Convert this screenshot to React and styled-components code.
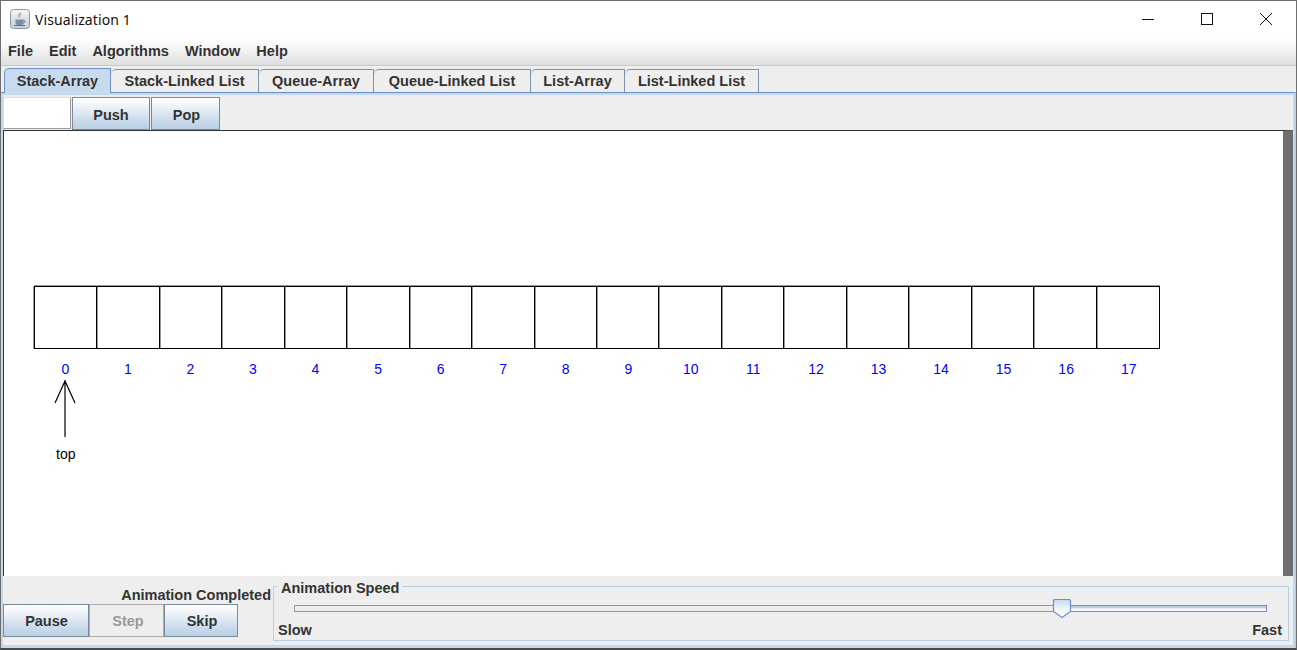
import React from 'react';
import styled, { createGlobalStyle } from 'styled-components';

const GlobalStyle = createGlobalStyle`
  html, body { margin: 0; padding: 0; background: #fff; overflow: hidden; }
  * { box-sizing: border-box; }
`;

const blueGradient = 'linear-gradient(to bottom, #ffffff 0%, #e8eff6 35%, #ccdcec 70%, #b9d0e6 100%)';

const Frame = styled.div`
  width: 1297px;
  height: 650px;
  display: flex;
  flex-direction: column;
  border: 1px solid #6e6e6e;
  border-bottom: 2px solid #4a4a4a;
  font-family: "Liberation Sans", Arial, sans-serif;
  font-weight: bold;
  font-size: 14.5px;
  color: #333;
  background: #eee;
`;

const TitleBar = styled.div`
  height: 36px;
  flex: none;
  display: flex;
  align-items: center;
  background: #fff;
  padding-left: 9px;
  font-family: "Noto Sans", sans-serif;
  font-weight: normal;
  font-size: 14px;
  letter-spacing: 0.1px;
  color: #111;
`;

const TitleText = styled.span`
  margin-left: 5px;
  flex: 1;
`;

const WinButton = styled.div`
  width: 59px;
  height: 36px;
  display: flex;
  align-items: center;
  justify-content: center;
  margin-top: -1px;
`;

const WinButtons = styled.div`
  display: flex;
  margin-right: 1px;
`;

const MenuBar = styled.div`
  height: 29px;
  flex: none;
  display: flex;
  align-items: center;
  gap: 16px;
  padding: 0 0 0 7px;
  background: linear-gradient(to bottom, #ffffff 0%, #f6f6f6 35%, #dedede 100%);
  border-bottom: 1px solid #c9c9c9;
`;

const TabStrip = styled.div`
  height: 26px;
  flex: none;
  display: flex;
  align-items: flex-end;
  padding-left: 3px;
  background: #eee;
`;

const Tab = styled.div`
  position: relative;
  height: ${p => (p.$active ? '25px' : '23px')};
  margin-bottom: ${p => (p.$active ? '-1px' : '0')};
  z-index: ${p => (p.$active ? 1 : 0)};
  width: ${p => p.$w}px;
  padding-bottom: ${p => (p.$active ? '1px' : '0')};
  display: flex;
  align-items: center;
  justify-content: center;
  border: 1px solid ${p => (p.$active ? '#6d8fc5' : '#7d93ad')};
  border-left-width: ${p => (p.$active ? '1px' : '0')};
  border-bottom: none;
  border-top-left-radius: 5px;
  background: ${p => (p.$active ? '#c8dbee' : '#eee')};
`;

const TabBody = styled.div`
  flex: 1;
  min-height: 0;
  display: flex;
  flex-direction: column;
  padding: 4px 2px 3px 2px;
  border-top: 1px solid #6d8fc5;
  border-right: 1px solid #b3cbe8;
  box-shadow: inset 0 2px 0 #c5d9ee, inset -2px 0 0 #c5d9ee, inset 2px 0 0 #c5d9ee, inset 0 -3px 0 #c5d9ee;
`;

const Toolbar = styled.div`
  height: 33px;
  flex: none;
  display: flex;
`;

const InputBox = styled.div`
  width: 68px;
  height: 32px;
  margin-right: 1px;
  background: #fff;
  border: 1px solid #9a9a9a;
  border-left-color: #ddd;
  border-top-color: #ddd;
`;

const Button = styled.div`
  width: ${p => p.$w}px;
  height: 33px;
  flex: none;
  margin-right: ${p => p.$gap || 0}px;
  padding-left: ${p => p.$shift || 0}px;
  padding-top: ${p => p.$drop || 0}px;
  display: flex;
  align-items: center;
  justify-content: center;
  border: 1px solid ${p => (p.$disabled ? '#aaa' : '#7a8a99')};
  background: ${p => (p.$disabled ? '#eee' : blueGradient)};
  color: ${p => (p.$disabled ? '#999' : '#333')};
`;

const Canvas = styled.div`
  position: relative;
  height: 446px;
  flex: none;
  background: #fff;
  border-top: 1px solid #333;
  border-left: 1px solid #333;
  border-right: 10px solid #6f6f6f;
`;

const Cells = styled.div`
  position: absolute;
  left: 30px;
  top: 155px;
  width: 1126px;
  height: 63px;
  display: grid;
  grid-template-columns: repeat(18, 1fr);
  border: 1px solid #000;
  box-shadow: 0 -1px 0 #999, -1px 0 0 #999;
`;

const Cell = styled.div`
  border-right: 1px solid #000;
  box-shadow: 1px 0 0 #999;
  &:last-child { border-right: none; box-shadow: none; }
`;

const Indexes = styled.div`
  position: absolute;
  left: 30px;
  top: 230px;
  width: 1126px;
  display: grid;
  grid-template-columns: repeat(18, 1fr);
`;

const Index = styled.span`
  text-align: center;
  font-weight: normal;
  font-size: 14px;
  color: #0000ff;
`;

const TopArrow = styled.svg`
  position: absolute;
  left: 49px;
  top: 248px;
`;

const TopLabel = styled.span`
  position: absolute;
  left: 52px;
  top: 315px;
  font-weight: normal;
  font-size: 14px;
  color: #000;
`;

const BottomBar = styled.div`
  flex: 1;
  min-height: 0;
  display: flex;
  align-items: stretch;
  background: #eee;
`;

const ControlColumn = styled.div`
  width: 268px;
  flex: none;
  display: flex;
  flex-direction: column;
  align-items: flex-start;
`;

const Status = styled.div`
  align-self: flex-end;
  height: 18px;
  margin-top: 10px;
  line-height: 18px;
`;

const ControlRow = styled.div`
  display: flex;
`;

const SpeedGroup = styled.div`
  position: relative;
  flex: 1;
  height: 55px;
  margin: 10px 4px 0 2px;
  border: 1px solid #b8cfe6;
  padding: 0 6px 0 4px;
`;

const Legend = styled.span`
  position: absolute;
  left: 4px;
  top: -7px;
  padding: 0 3px;
  background: #eee;
  line-height: 16px;
`;

const Track = styled.div`
  position: relative;
  height: 7px;
  margin: 18px 15px 0 16px;
  border: 1px solid #6d8fc5;
  background: linear-gradient(to bottom, #b9cde3 0%, #b9cde3 30%, #f4f8fc 60%, #ffffff 100%);
`;

const TrackFilled = styled.div`
  position: absolute;
  left: -1px;
  top: -1px;
  bottom: -1px;
  background: #ededed;
  border: 1px solid #8b98a5;
`;

const Thumb = styled.svg`
  position: absolute;
  top: -7px;
  transform: translateX(-50%);
`;

const RangeLabels = styled.div`
  display: flex;
  justify-content: space-between;
  margin-top: 10px;
`;

const menus = ['File', 'Edit', 'Algorithms', 'Window', 'Help'];
const tabs = [
  ['Stack-Array', 107],
  ['Stack-Linked List', 148],
  ['Queue-Array', 115],
  ['Queue-Linked List', 157],
  ['List-Array', 94],
  ['List-Linked List', 134],
];
const cells = Array.from({ length: 18 }, (_, i) => i);
const speed = (769 / 973) * 100;

const JavaIcon = () => (
  <svg width="20" height="20" viewBox="0 0 20 20">
    <defs>
      <linearGradient id="jbg" x1="0" y1="0" x2="0" y2="1">
        <stop offset="0" stopColor="#f4f6f8" />
        <stop offset="1" stopColor="#c4ccd4" />
      </linearGradient>
    </defs>
    <rect x="0.5" y="0.5" width="19" height="19" rx="3" fill="url(#jbg)" stroke="#8d9aa8" />
    <path d="M10.5 3c1.5 2-2 3-1 5 .4.8 1 1.2 1 1.2-.9-.2-2.6-1.6-2-3.2C9 4.8 10.8 4.3 10.5 3z" fill="#e0561c" />
    <path d="M12 5.5c-1.5.8-1.5 1.8-1 3-.8-1-.6-2.4 1-3z" fill="#e0561c" />
    <path d="M5.5 10.5h8v3a2.5 2.5 0 0 1-2.5 2.5H8a2.5 2.5 0 0 1-2.5-2.5z" fill="#7c8ea3" />
    <path d="M13.5 11.2c2 0 2 2.4-.3 2.6" fill="none" stroke="#5c6f86" />
    <path d="M4 16.5h11" stroke="#5c6f86" />
  </svg>
);

const App = () => (
  <Frame>
    <GlobalStyle />
    <TitleBar>
      <JavaIcon />
      <TitleText>Visualization 1</TitleText>
      <WinButtons>
        <WinButton>
          <svg width="12" height="12"><path d="M0 6.5h12" stroke="#111" /></svg>
        </WinButton>
        <WinButton>
          <svg width="12" height="12"><rect x="0.5" y="0.5" width="11" height="11" fill="none" stroke="#111" /></svg>
        </WinButton>
        <WinButton>
          <svg width="12" height="12"><path d="M0 0l12 12M12 0L0 12" stroke="#111" /></svg>
        </WinButton>
      </WinButtons>
    </TitleBar>
    <MenuBar>
      {menus.map(m => <span key={m}>{m}</span>)}
    </MenuBar>
    <TabStrip>
      {tabs.map(([name, w], i) => (
        <Tab key={name} $w={w} $active={i === 0}>{name}</Tab>
      ))}
    </TabStrip>
    <TabBody>
      <Toolbar>
        <InputBox />
        <Button $w={78} $gap={1} $drop={2}>Push</Button>
        <Button $w={69} $drop={2} $shift={2}>Pop</Button>
      </Toolbar>
      <Canvas>
        <Cells>
          {cells.map(i => <Cell key={i} />)}
        </Cells>
        <Indexes>
          {cells.map(i => <Index key={i}>{i}</Index>)}
        </Indexes>
        <TopArrow width="24" height="60" viewBox="0 0 24 60">
          <path d="M12 58V1M2 24L12 2l10 22" fill="none" stroke="#000" strokeWidth="1.2" />
        </TopArrow>
        <TopLabel>top</TopLabel>
      </Canvas>
      <BottomBar>
        <ControlColumn>
          <Status>Animation Completed</Status>
          <ControlRow>
            <Button $w={86} $shift={1}>Pause</Button>
            <Button $w={75} $disabled $shift={3}>Step</Button>
            <Button $w={74} $shift={2}>Skip</Button>
          </ControlRow>
        </ControlColumn>
        <SpeedGroup>
          <Legend>Animation Speed</Legend>
          <Track>
            <TrackFilled style={{ width: `${speed}%` }} />
            <Thumb style={{ left: `${speed}%` }} width="20" height="20" viewBox="0 0 20 20">
              <defs>
                <linearGradient id="thumbFill" x1="0" y1="0" x2="0" y2="1">
                  <stop offset="0" stopColor="#c5d9ee" />
                  <stop offset="0.5" stopColor="#eef4fa" />
                  <stop offset="1" stopColor="#ffffff" />
                </linearGradient>
              </defs>
              <path d="M2.5.5h15l1 1v11L10 18.5 1.5 12.5v-11z" fill="url(#thumbFill)" stroke="#6d8fc5" strokeWidth="1.2" />
            </Thumb>
          </Track>
          <RangeLabels>
            <span>Slow</span>
            <span>Fast</span>
          </RangeLabels>
        </SpeedGroup>
      </BottomBar>
    </TabBody>
  </Frame>
);

export default App;
